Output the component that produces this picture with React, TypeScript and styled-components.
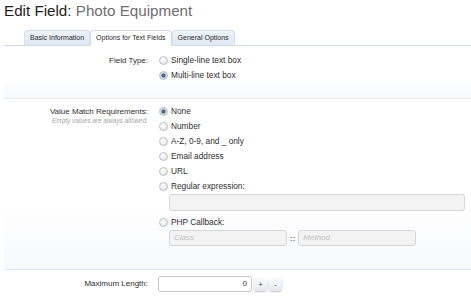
import styled, { createGlobalStyle } from "styled-components";

const GlobalStyle = createGlobalStyle`
  html, body {
    margin: 0;
    padding: 0;
    background: #ffffff;
  }
  body {
    font-family: "Liberation Sans", Arial, sans-serif;
    color: #333;
  }
`;

const Page = styled.div`
  width: 471px;
  height: 300px;
  overflow: hidden;
  padding: 0 0 0 4px;
  box-sizing: border-box;
`;

const Title = styled.h1`
  margin: 0;
  padding: 1px 0 0 0;
  font-size: 15.2px;
  font-weight: normal;
  line-height: 20px;
  color: #1e1e1e;
  span {
    color: #6e6e6e;
  }
`;

const TabBar = styled.div`
  display: flex;
  margin-top: 9px;
  padding-left: 20px;
  border-bottom: 1px solid #cfdbe9;
  height: 15px;
`;

const Tab = styled.div<{ active?: boolean }>`
  font-size: 7px;
  line-height: 14px;
  padding: 0 5px;
  margin-bottom: -1px;
  border: 1px solid ${(p) => (p.active ? "#cfdbe9" : "#d3dfec")};
  border-bottom-color: ${(p) => (p.active ? "#fff" : "#cfdbe9")};
  border-radius: 4px 4px 0 0;
  background: ${(p) =>
    p.active ? "#ffffff" : "linear-gradient(#eef3f9, #dfe8f3)"};
  color: #2a2a2a;
  white-space: nowrap;
`;

const Section = styled.div<{ top: number; bottom: number }>`
  display: grid;
  grid-template-columns: 144px 1fr;
  column-gap: 10px;
  padding: ${(p) => p.top}px 0 ${(p) => p.bottom}px 0;
  border-bottom: 1px solid #e6e9f0;
  background: linear-gradient(#ffffff 60%, #f8f9fc);
`;

const LastSection = styled.div`
  display: grid;
  grid-template-columns: 144px 1fr;
  column-gap: 10px;
  padding: 6px 0 0 0;
`;

const LabelCell = styled.div`
  text-align: right;
`;

const Label = styled.div`
  font-size: 8px;
  line-height: 15px;
  color: #2e2e2e;
`;

const Hint = styled.div`
  font-size: 6.4px;
  font-style: italic;
  color: #a3a3a3;
  line-height: 7px;
  margin-top: -2px;
`;

const Options = styled.div`
  display: flex;
  flex-direction: column;
`;

const Option = styled.div`
  display: flex;
  align-items: center;
  gap: 3px;
  font-size: 8.3px;
  line-height: 15px;
  color: #2e2e2e;
  padding-left: 1px;
`;

const Radio = styled.span<{ checked?: boolean }>`
  width: 7px;
  height: 7px;
  border-radius: 50%;
  border: 1px solid #b9bec6;
  background: ${(p) =>
    p.checked
      ? "radial-gradient(circle, #4a6580 0, #4a6580 1.6px, #c8d2de 2.4px, #eef1f5 100%)"
      : "radial-gradient(circle at 40% 35%, #ffffff, #dcdfe4)"};
  flex: none;
`;

const SubField = styled.div<{ gapBottom: number }>`
  display: flex;
  align-items: center;
  gap: 3px;
  margin-left: 11px;
  margin-bottom: ${(p) => p.gapBottom}px;
`;

const TextBox = styled.div<{ w: number; h: number; disabled?: boolean }>`
  width: ${(p) => p.w}px;
  height: ${(p) => p.h}px;
  box-sizing: border-box;
  border: 1px solid ${(p) => (p.disabled ? "#d6d6d6" : "#c4c4c4")};
  border-radius: 3px;
  background: ${(p) => (p.disabled ? "#f3f3f3" : "#ffffff")};
  font-size: 8px;
  line-height: ${(p) => p.h - 2}px;
  padding: 0 4px;
  color: #333;
`;

const Placeholder = styled.span`
  color: #c2c2c2;
  font-style: italic;
`;

const Sep = styled.span`
  font-size: 8px;
  font-weight: bold;
  color: #777;
`;

const NumberBox = styled(TextBox)`
  text-align: right;
`;

const Spinner = styled.div`
  display: flex;
  align-items: center;
  gap: 2px;
`;

const SpinButton = styled.div`
  width: 13px;
  height: 13px;
  border-radius: 3px;
  background: linear-gradient(#fafbfd, #e3e7ef);
  box-shadow: 0 1px 2px rgba(0, 0, 0, 0.25);
  font-size: 7px;
  line-height: 13px;
  text-align: center;
  color: #333;
`;

export default function App() {
  return (
    <Page>
      <GlobalStyle />
      <Title>
        Edit Field: <span>Photo Equipment</span>
      </Title>
      <TabBar>
        <Tab>Basic Information</Tab>
        <Tab active>Options for Text Fields</Tab>
        <Tab>General Options</Tab>
      </TabBar>

      <Section top={7} bottom={15}>
        <LabelCell>
          <Label>Field Type:</Label>
        </LabelCell>
        <Options>
          <Option>
            <Radio /> Single-line text box
          </Option>
          <Option>
            <Radio checked /> Multi-line text box
          </Option>
        </Options>
      </Section>

      <Section top={5} bottom={23}>
        <LabelCell>
          <Label>Value Match Requirements:</Label>
          <Hint>Empty values are always allowed.</Hint>
        </LabelCell>
        <Options>
          <Option>
            <Radio checked /> None
          </Option>
          <Option>
            <Radio /> Number
          </Option>
          <Option>
            <Radio /> A-Z, 0-9, and _ only
          </Option>
          <Option>
            <Radio /> Email address
          </Option>
          <Option>
            <Radio /> URL
          </Option>
          <Option>
            <Radio /> Regular expression:
          </Option>
          <SubField gapBottom={4}>
            <TextBox w={296} h={17} disabled />
          </SubField>
          <Option>
            <Radio /> PHP Callback:
          </Option>
          <SubField gapBottom={0}>
            <TextBox w={118} h={16} disabled>
              <Placeholder>Class</Placeholder>
            </TextBox>
            <Sep>::</Sep>
            <TextBox w={118} h={16} disabled>
              <Placeholder>Method</Placeholder>
            </TextBox>
          </SubField>
        </Options>
      </Section>

      <LastSection>
        <LabelCell>
          <Label>Maximum Length:</Label>
        </LabelCell>
        <Spinner>
          <NumberBox w={94} h={16}>0</NumberBox>
          <SpinButton>+</SpinButton>
          <SpinButton>-</SpinButton>
        </Spinner>
      </LastSection>
    </Page>
  );
}
